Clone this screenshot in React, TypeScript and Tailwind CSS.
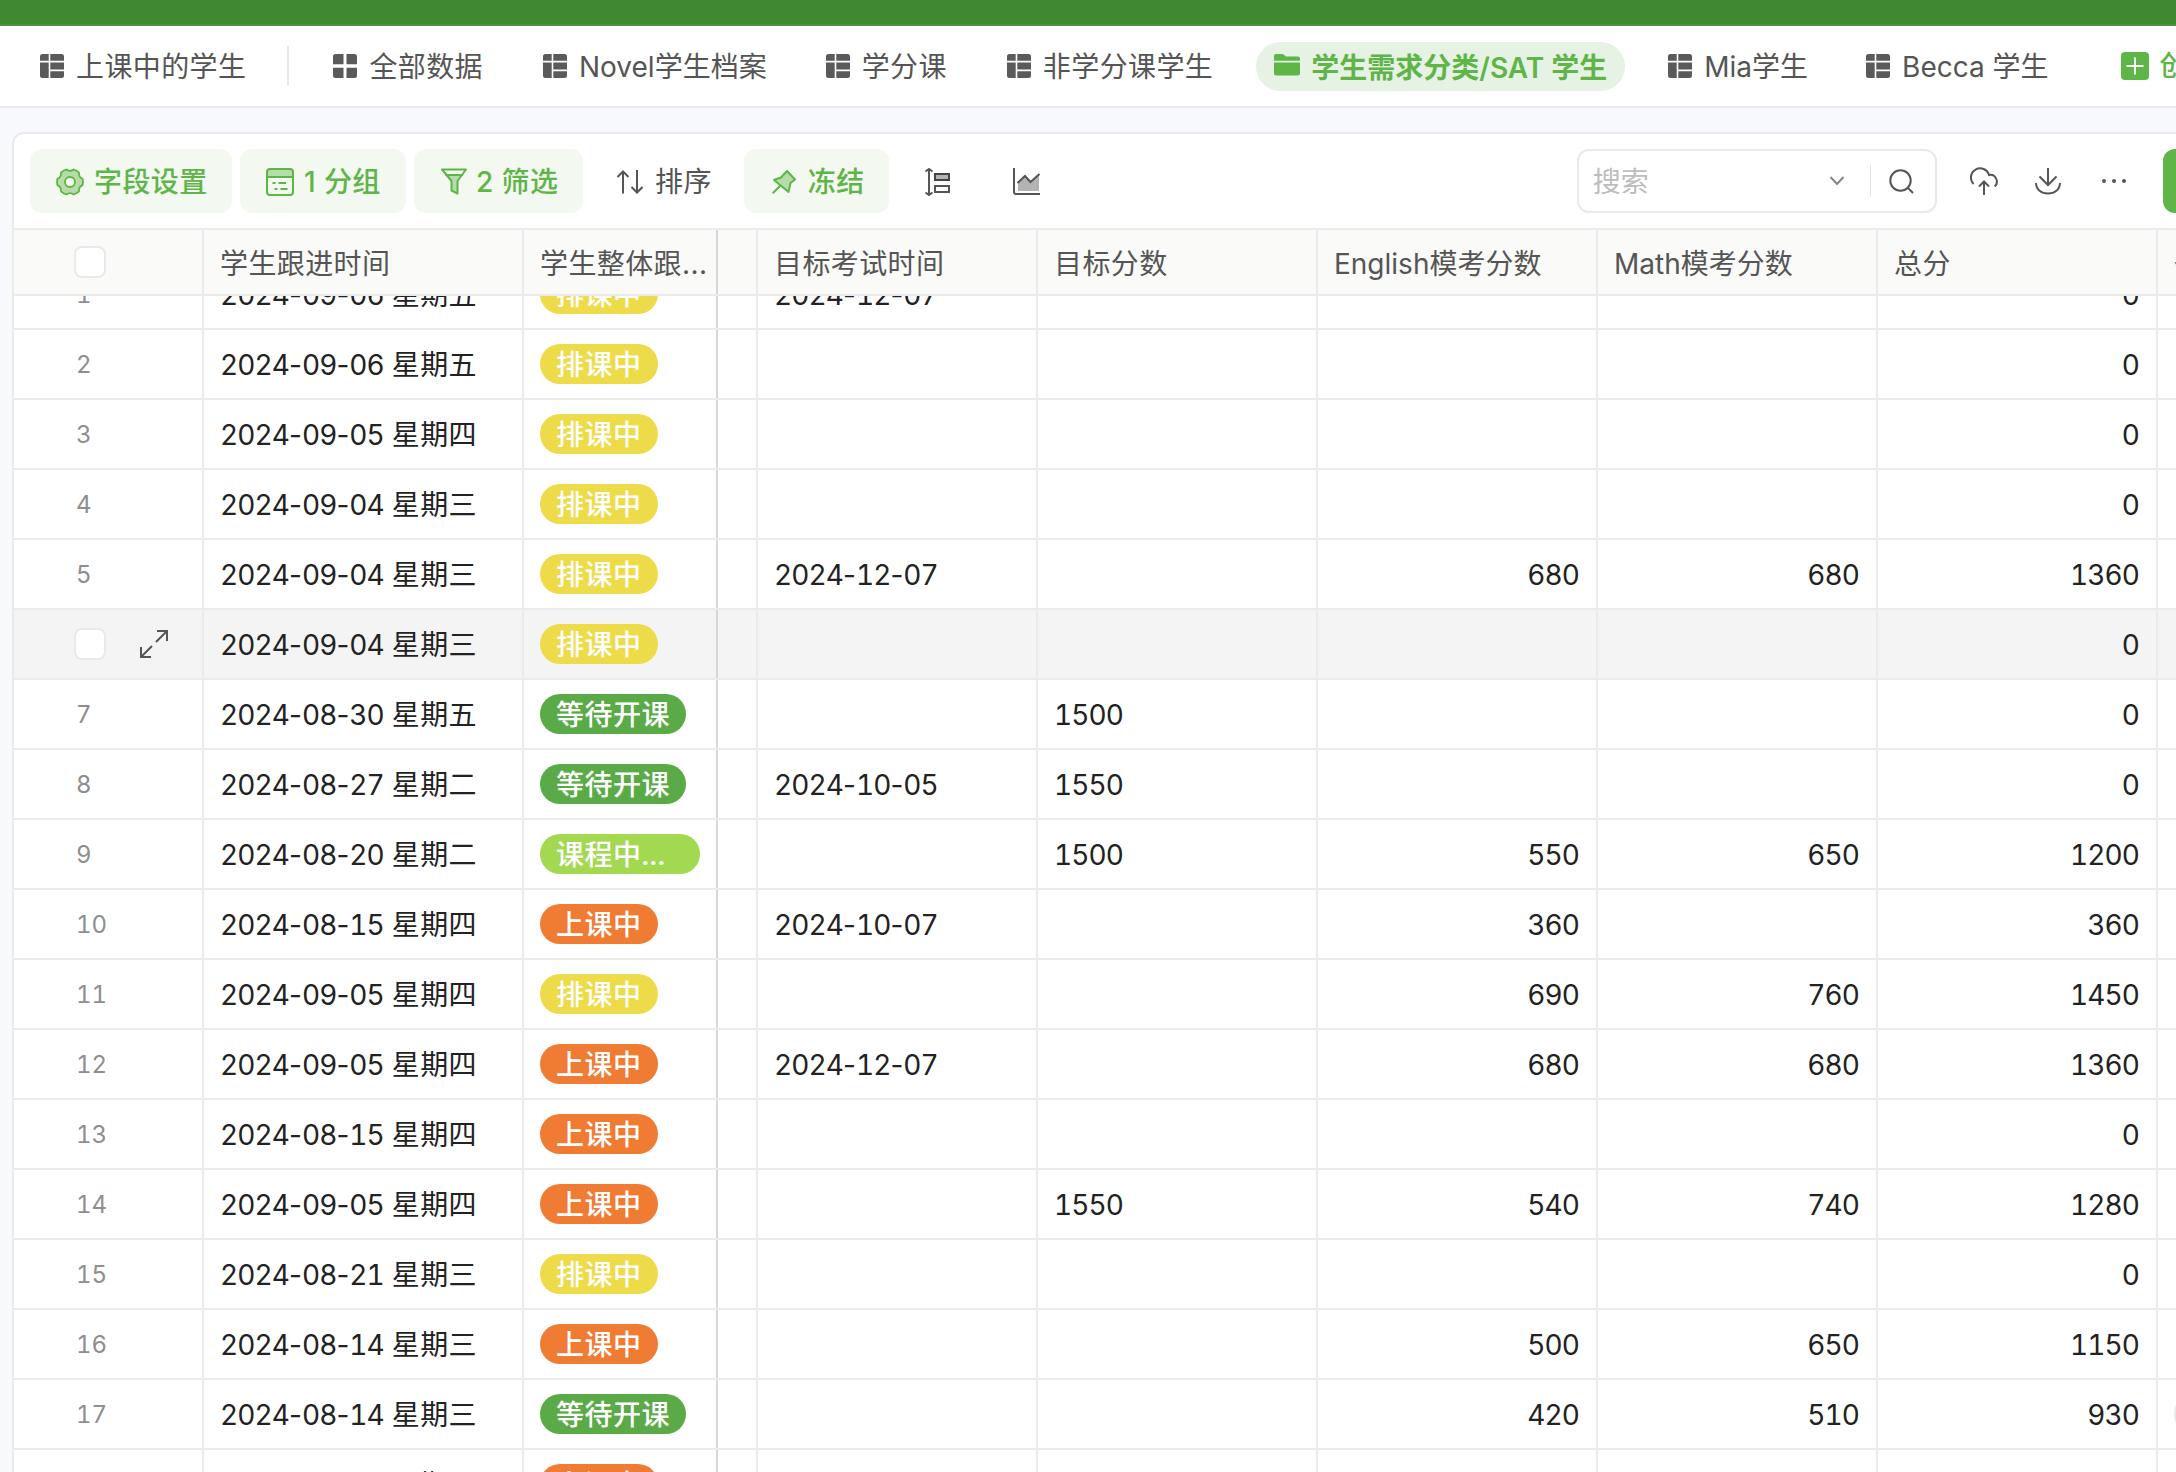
import type { ReactNode } from "react";
import clsx from "clsx";

type Row = {
  n: number;
  date: string;
  day: string;
  status: keyof typeof statusColors;
  exam?: string;
  target?: number;
  english?: number;
  math?: number;
  total: number;
  hovered?: boolean;
  owner?: boolean;
};

const statusColors = {
  排课中: "bg-[#eedb4a]",
  等待开课: "bg-[#5aab47]",
  "课程中...": "bg-[#a3d951]",
  上课中: "bg-[#f07b33]",
};

const rows: Row[] = [
  { n: 1, date: "2024-09-06", day: "星期五", status: "排课中", exam: "2024-12-07", total: 0 },
  { n: 2, date: "2024-09-06", day: "星期五", status: "排课中", total: 0 },
  { n: 3, date: "2024-09-05", day: "星期四", status: "排课中", total: 0 },
  { n: 4, date: "2024-09-04", day: "星期三", status: "排课中", total: 0 },
  { n: 5, date: "2024-09-04", day: "星期三", status: "排课中", exam: "2024-12-07", english: 680, math: 680, total: 1360 },
  { n: 6, date: "2024-09-04", day: "星期三", status: "排课中", total: 0, hovered: true },
  { n: 7, date: "2024-08-30", day: "星期五", status: "等待开课", target: 1500, total: 0 },
  { n: 8, date: "2024-08-27", day: "星期二", status: "等待开课", exam: "2024-10-05", target: 1550, total: 0 },
  { n: 9, date: "2024-08-20", day: "星期二", status: "课程中...", target: 1500, english: 550, math: 650, total: 1200 },
  { n: 10, date: "2024-08-15", day: "星期四", status: "上课中", exam: "2024-10-07", english: 360, total: 360 },
  { n: 11, date: "2024-09-05", day: "星期四", status: "排课中", english: 690, math: 760, total: 1450 },
  { n: 12, date: "2024-09-05", day: "星期四", status: "上课中", exam: "2024-12-07", english: 680, math: 680, total: 1360 },
  { n: 13, date: "2024-08-15", day: "星期四", status: "上课中", total: 0 },
  { n: 14, date: "2024-09-05", day: "星期四", status: "上课中", target: 1550, english: 540, math: 740, total: 1280 },
  { n: 15, date: "2024-08-21", day: "星期三", status: "排课中", total: 0 },
  { n: 16, date: "2024-08-14", day: "星期三", status: "上课中", english: 500, math: 650, total: 1150 },
  { n: 17, date: "2024-08-14", day: "星期三", status: "等待开课", english: 420, math: 510, total: 930, owner: true },
  { n: 18, date: "2024-08-14", day: "星期三", status: "上课中", total: 0 },
];

const columns =
  "grid w-[2444px] grid-cols-[190px_320px_194px_40px_280px_280px_280px_280px_280px_300px]";

function TableIcon() {
  return (
    <svg width="24" height="24" viewBox="0 0 24 24" fill="#5a5a5a" className="shrink-0">
      <path d="M2.500 0h6.200v6.700H0V2.500A2.500 2.500 0 0 1 2.500 0zM10.300 0h11.200A2.500 2.500 0 0 1 24 2.500v4.200H10.300zM0 8.500h8.700V24H2.500A2.500 2.500 0 0 1 0 21.500zM10.300 8.500H24v7H10.300zM10.300 17.300H24v4.200a2.500 2.500 0 0 1-2.500 2.500H10.300z" />
    </svg>
  );
}

function GridIcon() {
  return (
    <svg width="24" height="24" viewBox="0 0 24 24" fill="#5a5a5a" className="shrink-0">
      <path d="M2.500 0h8v10.300H0V2.500A2.500 2.500 0 0 1 2.500 0zM13.500 0h8A2.500 2.500 0 0 1 24 2.500v7.800H13.500zM0 13.700h10.500V24h-8A2.500 2.500 0 0 1 0 21.500zM13.500 13.700H24v7.800a2.500 2.500 0 0 1-2.500 2.500h-8z" />
    </svg>
  );
}

// Chinese labels are set slightly looser than mixed Latin ones
function Label({ text, className }: { text: string; className?: string }) {
  const mixed = /[A-Za-z]/.test(text);
  return <span className={clsx(mixed ? "tracking-normal" : "tracking-[0.4px]", className)}>{text}</span>;
}

function Tab({ icon, label, className }: { icon: ReactNode; label: string; className?: string }) {
  return (
    <div className={clsx("flex shrink-0 items-center gap-3", className)}>
      {icon}
      <Label text={label} className="pt-px" />
    </div>
  );
}

function ToolButton({ icon, label, className }: { icon: ReactNode; label: string; className?: string }) {
  return (
    <button className={clsx("flex h-16 shrink-0 items-center rounded-xl pt-px", className)}>
      {icon}
      <Label text={label} className="pt-px" />
    </button>
  );
}

function Checkbox() {
  return <span className="block size-8 rounded-lg border-2 border-[#e9e9e9] bg-white" />;
}

function Cell({ children, right, dark }: { children?: ReactNode; right?: boolean; dark?: boolean }) {
  return (
    <div
      className={clsx(
        "flex items-center border-r-2 px-4 whitespace-nowrap",
        right && "justify-end",
        dark ? "border-[#d6d6d6]" : "border-[#ebebeb]",
      )}
    >
      {children}
    </div>
  );
}

function Num({ children }: { children?: number }) {
  return <span className="mr-px pt-[2px] tracking-[-0.9px]">{children}</span>;
}

function DateText({ date, day }: { date?: string; day?: string }) {
  if (!date) return null;
  const [y, m, d] = date.split("-");
  const dash = <span className="tracking-normal proportional-nums">-</span>;
  return (
    <span className="pt-[2px] tracking-[-0.9px] whitespace-pre">
      {y}
      {dash}
      {m}
      {dash}
      {d}
      {day && <span className="tracking-[0.4px]"> {day}</span>}
    </span>
  );
}

function TabBar() {
  return (
    <nav className="flex h-[82px] items-center overflow-hidden border-b-2 border-[#e9eaec] bg-white pl-10 text-[#555]">
      <Tab icon={<TableIcon />} label="上课中的学生" />
      <div className="mr-11 ml-[41px] h-10 w-[2px] shrink-0 bg-[#e9e9e9]" />
      <Tab icon={<GridIcon />} label="全部数据" />
      <Tab icon={<TableIcon />} label="Novel学生档案" className="ml-[60px]" />
      <Tab icon={<TableIcon />} label="学分课" className="ml-[59px]" />
      <Tab icon={<TableIcon />} label="非学分课学生" className="ml-[60px]" />
      <div className="ml-[43px] flex h-[49px] w-[369px] shrink-0 items-center gap-[11px] rounded-full bg-[#e6f2e4] pl-[18px] font-semibold text-[#5fb548]">
        <svg width="26" height="22" viewBox="0 0 26 22" fill="#5fb548" className="mb-[2px] shrink-0">
          <path d="M2 0h7l3 2.500h12a2 2 0 0 1 2 2v2.300H0V2a2 2 0 0 1 2-2z" />
          <path d="M0 8.500h26V19a2.500 2.500 0 0 1-2.500 2.500h-21A2.500 2.500 0 0 1 0 19z" />
        </svg>
        <Label text="学生需求分类/SAT 学生" className="pt-[3px]" />
      </div>
      <Tab icon={<TableIcon />} label="Mia学生" className="ml-[43px]" />
      <Tab icon={<TableIcon />} label="Becca 学生" className="ml-[58px]" />
      <div className="ml-[72px] flex shrink-0 items-center gap-[11px] font-medium text-[#5fb548]">
        <svg width="28" height="28" viewBox="0 0 28 28" className="shrink-0">
          <rect width="28" height="28" rx="4" fill="#5fb548" />
          <path d="M14 5.500v17M5.500 14h17" stroke="#fff" strokeWidth="2" />
        </svg>
        <span>创建</span>
      </div>
    </nav>
  );
}

function Toolbar() {
  return (
    <div className="flex h-[94px] items-center pl-4 text-[#555]">
      <ToolButton
        className="w-[202px] gap-[10px] bg-[#f3f8f1] pl-[26px] font-medium text-[#5fb548]"
        label="字段设置"
        icon={
          <svg width="28" height="28" viewBox="0 0 28 28" fill="#b5dca9" stroke="#5fb548" strokeWidth="1.800" strokeLinejoin="round">
            <path d="M26.600 10.900A13 13 0 0 1 26.600 17.100Q22.500 18.900 23 23.400A13 13 0 0 1 17.600 26.500Q14 23.800 10.400 26.500A13 13 0 0 1 5 23.400Q5.500 18.900 1.400 17.100A13 13 0 0 1 1.400 10.900Q5.500 9.100 5 4.600A13 13 0 0 1 10.400 1.500Q14 4.200 17.600 1.500A13 13 0 0 1 23 4.600Q22.500 9.100 26.600 10.900Z" />
            <circle cx="14" cy="14" r="5" fill="#f3f8f1" />
          </svg>
        }
      />
      <ToolButton
        className="ml-2 w-[166px] gap-[10px] bg-[#f3f8f1] pl-[26px] font-medium text-[#5fb548]"
        label="1 分组"
        icon={
          <svg width="28" height="28" viewBox="0 0 28 28" fill="none" stroke="#5fb548" strokeWidth="2">
            <path d="M2 2h24v7H2z" fill="#b5dca9" stroke="none" />
            <rect x="1" y="1" width="26" height="26" rx="3" />
            <path d="M1 9h26M6.500 15h3M12.500 15h7.500M8.500 21h3M14.500 21h7" />
          </svg>
        }
      />
      <ToolButton
        className="ml-2 w-[169px] gap-[9px] bg-[#f3f8f1] pl-[27px] font-medium text-[#5fb548]"
        label="2 筛选"
        icon={
          <svg width="26" height="27" viewBox="0 0 26 27" fill="none" stroke="#5fb548" strokeWidth="2" strokeLinejoin="round">
            <path d="M4 7h18l-5.500 6v12.500l-6-3V13z" fill="#b5dca9" stroke="none" />
            <path d="M1 1.500h24l-8.500 11.500v12.500l-6-3V13z" />
            <path d="M4.500 7h17" />
          </svg>
        }
      />
      <ToolButton
        className="ml-[34px] gap-3"
        label="排序"
        icon={
          <svg width="26" height="24" viewBox="0 0 26 24" fill="none" stroke="#555" strokeWidth="2">
            <path d="M6 23.500V2M0.500 7L6 1.500 11.500 7M20 0v22M14.500 17l5.500 5.500 5.500-5.500" />
          </svg>
        }
      />
      <ToolButton
        className="ml-8 w-[145px] gap-3 bg-[#f3f8f1] pl-[28px] font-medium text-[#5fb548]"
        label="冻结"
        icon={
          <svg width="24" height="24" viewBox="0 0 24 24" fill="#b5dca9" stroke="#5fb548" strokeWidth="2" strokeLinejoin="round">
            <path d="M15 1l8 8.500-4.500 3.500-2 9L2 10l7-2.500z" />
            <path d="M8.500 15.500L.7 23.300" />
          </svg>
        }
      />
      <svg width="28" height="28" viewBox="0 0 28 28" fill="none" stroke="#555" strokeWidth="2" className="mt-px ml-[35px] shrink-0">
        <path d="M5 1v26M1.500 3.500L5 1l3.500 2.500M1.500 24.500L5 27l3.500-2.500" />
        <path d="M11 6h14v6H11z" fill="#b3b3b3" stroke="#444" />
        <path d="M11 18h14v6H11z" />
      </svg>
      <svg width="28" height="28" viewBox="0 0 28 28" fill="none" stroke="#555" strokeWidth="2" className="ml-[61px] shrink-0">
        <path d="M5 15.500l7-6.500 5.500 6L26 7v17H5z" fill="#b3b3b3" stroke="none" />
        <path d="M1 1v24a2 2 0 0 0 2 2h24M4.500 16L12 9l5.500 6L26.500 7" />
      </svg>
      <div className="ml-[536px] flex h-16 w-[360px] shrink-0 items-center rounded-xl border-2 border-[#e9e9e9] pl-[14px]">
        <span className="w-56 pt-px text-left text-[#bdbdbd]">搜索</span>
        <svg width="16" height="10" viewBox="0 0 16 10" fill="none" stroke="#888" strokeWidth="2" className="ml-[12px]">
          <path d="M1.500 1L8 8l6.500-7" />
        </svg>
        <div className="ml-[25px] h-8 w-px bg-[#e3e3e3]" />
        <svg width="25" height="25" viewBox="0 0 25 25" fill="none" stroke="#555" strokeWidth="2" className="ml-[18px]">
          <circle cx="11.500" cy="11.500" r="10.200" />
          <path d="M18.500 18.500l5.500 5.500" />
        </svg>
      </div>
      <svg width="28" height="28" viewBox="0 0 28 28" fill="none" stroke="#555" strokeWidth="2" className="ml-[33px] shrink-0">
        <path d="M3.600 17A9.200 9.200 0 1 1 19 8A6.700 6.700 0 0 1 24.700 19.500M14 28V15M9 19.500l5-5 5 5" />
      </svg>
      <svg width="26" height="28" viewBox="0 0 26 28" fill="none" stroke="#555" strokeWidth="2" className="ml-[37px] shrink-0">
        <path d="M13 1v17M4.500 9.500L13 18l8.500-8.500M1 16c0 6.500 5.500 10.500 12 10.500S25 22.500 25 16" />
      </svg>
      <svg width="26" height="6" viewBox="0 0 26 6" fill="#555" className="ml-10 shrink-0">
        <circle cx="3" cy="3" r="2" />
        <circle cx="13" cy="3" r="2" />
        <circle cx="23" cy="3" r="2" />
      </svg>
      <div className="ml-[36px] h-16 w-40 shrink-0 rounded-xl bg-[#5fb548]" />
    </div>
  );
}

const headers = ["学生跟进时间", "学生整体跟...", "", "目标考试时间", "目标分数", "English模考分数", "Math模考分数", "总分", "备注"];

function TableHeader() {
  return (
    <div className={clsx(columns, "h-[68px] border-y-2 border-[#ebebeb] bg-[#fafaf9] text-[#555]")}>
      <div className="flex items-center border-r-2 border-[#ebebeb] pl-[60px]">
        <Checkbox />
      </div>
      {headers.map((title, i) => (
        <Cell key={i} dark={i === 1}>
          <Label text={title} className="pt-[3px]" />
        </Cell>
      ))}
    </div>
  );
}

function TableRow({ row }: { row: Row }) {
  return (
    <div className={clsx(columns, "h-[70px] border-b-2 border-[#ebebeb]", row.hovered && "bg-[#f4f4f4]")}>
      <div className="flex items-center border-r-2 border-[#ebebeb]">
        {row.hovered ? (
          <>
            <span className="ml-[60px]">
              <Checkbox />
            </span>
            <svg width="28" height="28" viewBox="0 0 28 28" fill="none" stroke="#555" strokeWidth="2" className="ml-[34px]">
              <path d="M17 1h10v10M27 1L16 12M11 27H1V17M1 27l11-11" />
            </svg>
          </>
        ) : (
          <span className="ml-[62px] pt-px text-2xl text-[#8e8e8e]">{row.n}</span>
        )}
      </div>
      <Cell>
        <DateText date={row.date} day={row.day} />
      </Cell>
      <Cell dark>
        <span
          className={clsx(
            "flex h-10 items-center rounded-full px-4 pt-[2px] font-medium tracking-[0.5px] text-white",
            statusColors[row.status],
            row.status === "课程中..." && "w-40",
          )}
        >
          {row.status}
        </span>
      </Cell>
      <Cell />
      <Cell>
        <DateText date={row.exam} />
      </Cell>
      <Cell>
        <Num>{row.target}</Num>
      </Cell>
      <Cell right>
        <Num>{row.english}</Num>
      </Cell>
      <Cell right>
        <Num>{row.math}</Num>
      </Cell>
      <Cell right>
        <Num>{row.total}</Num>
      </Cell>
      <Cell>{row.owner && <span className="size-12 rounded-full bg-[#e9e9e9]" />}</Cell>
    </div>
  );
}

export default function App() {
  return (
    <div className="flex h-[1472px] w-[2176px] flex-col overflow-hidden bg-[#f8f9fc] font-['Inter','Noto_Sans_CJK_SC',sans-serif] text-[28px] leading-10 text-[#222]">
      <div className="h-[26px] shrink-0 border-b-2 border-[#4c9340] bg-[#418931]" />
      <TabBar />
      <main className="mt-6 ml-3 flex min-h-0 flex-1 flex-col overflow-hidden rounded-tl-xl border-t-2 border-l-2 border-[#e9eaec] bg-white">
        <Toolbar />
        <TableHeader />
        <div className="min-h-0 flex-1 overflow-hidden tabular-nums">
          <div className="-mt-9">
            {rows.map((row) => (
              <TableRow key={row.n} row={row} />
            ))}
          </div>
        </div>
      </main>
    </div>
  );
}
